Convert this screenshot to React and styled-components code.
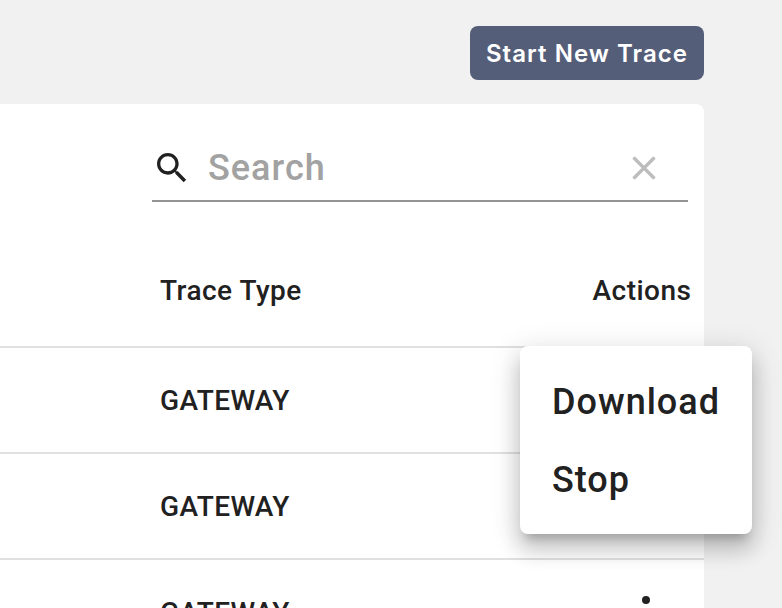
import React from "react";
import styled, { createGlobalStyle } from "styled-components";

const Global = createGlobalStyle`
  * { box-sizing: border-box; }
  body { margin: 0; background: #f1f1f1; font-family: Roboto, sans-serif; color: #212121; font-weight: 500; overflow: hidden; -webkit-font-smoothing: antialiased; }
`;

const Page = styled.main`
  position: relative;
  width: 782px;
  height: 608px;
  overflow: hidden;
  background: #f1f1f1;
`;
const Header = styled.header`
  display: flex;
  justify-content: flex-end;
  height: 104px;
  padding: 26px 78px 0 0;
`;
const StartButton = styled.button`
  width: 234px;
  height: 54px;
  padding: 2px 0 0;
  border: 0;
  border-radius: 8px;
  background: #545e79;
  color: #fff;
  font: 600 24px/52px Inter, sans-serif;
  letter-spacing: 1.04px;
  white-space: nowrap;
`;
const Card = styled.section`
  width: 704px;
  height: 520px;
  background: #fff;
  border-top-right-radius: 8px;
`;
const SearchArea = styled.div`
  height: 132px;
  padding: 32px 16px 0 152px;
`;
const SearchField = styled.div`
  display: flex;
  align-items: center;
  height: 66px;
  padding: 0 30px 0 0;
  border-bottom: 2px solid #949494;
`;
const SearchInput = styled.input`
  flex: 1;
  min-width: 0;
  margin-left: 16px;
  padding: 0;
  border: 0;
  outline: 0;
  background: transparent;
  font: 500 36px/44px Roboto, sans-serif;
  letter-spacing: 1px;
  &::placeholder { color: #a2a2a2; opacity: 1; }
`;
const Row = styled.div`
  display: grid;
  grid-template-columns: 432.5px 1fr;
  align-items: center;
  height: ${(p) => (p.$head ? 112 : 106)}px;
  padding-left: 160px;
  padding-bottom: ${(p) => (p.$head ? 2 : 0)}px;
  border-bottom: 2px solid #e0e0e0;
  font-size: 28px;
  letter-spacing: ${(p) => (p.$head ? 0.48 : 0.4)}px;
`;
const MoreButton = styled.button`
  justify-self: start;
  margin-left: 35.5px;
  padding: 0;
  border: 0;
  background: none;
  width: 36px;
  height: 48px;
`;
const Menu = styled.div`
  position: absolute;
  left: 520px;
  top: 346px;
  width: 232px;
  height: 188px;
  padding: 17px 0 15px;
  border-radius: 8px;
  background: #fff;
  box-shadow: 0 10px 10px -6px rgba(0,0,0,.2), 0 16px 20px 2px rgba(0,0,0,.14), 0 6px 28px 4px rgba(0,0,0,.12);
`;
const MenuItem = styled.div`
  height: 78px;
  padding-left: 32px;
  font-size: 36px;
  line-height: 78px;
  letter-spacing: 1px;
`;

const SearchIcon = () => (
  <svg width="40" height="40" viewBox="0 0 24 24" fill="#212121">
    <path d="M15.5 14h-.79l-.28-.27C15.41 12.59 16 11.11 16 9.5 16 5.91 13.09 3 9.5 3S3 5.91 3 9.5 5.91 16 9.5 16c1.61 0 3.09-.59 4.23-1.57l.27.28v.79l5 4.99L20.49 19l-4.99-5zm-6 0C7.01 14 5 11.99 5 9.5S7.01 5 9.5 5 14 7.01 14 9.5 11.99 14 9.5 14z" />
  </svg>
);
const ClearIcon = () => (
  <svg width="28" height="28" viewBox="0 0 28 28" fill="none" stroke="#bdbdbd" strokeWidth="3.3">
    <path d="M3.5 3.5l21 21M24.5 3.5l-21 21" />
  </svg>
);
const MoreIcon = () => (
  <svg width="36" height="48" viewBox="0 0 36 48" fill="#212121">
    <circle cx="18" cy="12" r="4" />
    <circle cx="18" cy="24" r="4" />
    <circle cx="18" cy="36" r="4" />
  </svg>
);

export default function App() {
  return (
    <Page>
      <Global />
      <Header><StartButton>Start New Trace</StartButton></Header>
      <Card>
        <SearchArea>
          <SearchField>
            <SearchIcon />
            <SearchInput placeholder="Search" aria-label="Search" />
            <ClearIcon />
          </SearchField>
        </SearchArea>
        <Row $head><span>Trace Type</span><span>Actions</span></Row>
        <Row><span>GATEWAY</span></Row>
        <Row><span>GATEWAY</span></Row>
        <Row><span>GATEWAY</span><MoreButton aria-label="More actions"><MoreIcon /></MoreButton></Row>
      </Card>
      <Menu>
        <MenuItem>Download</MenuItem>
        <MenuItem>Stop</MenuItem>
      </Menu>
    </Page>
  );
}
